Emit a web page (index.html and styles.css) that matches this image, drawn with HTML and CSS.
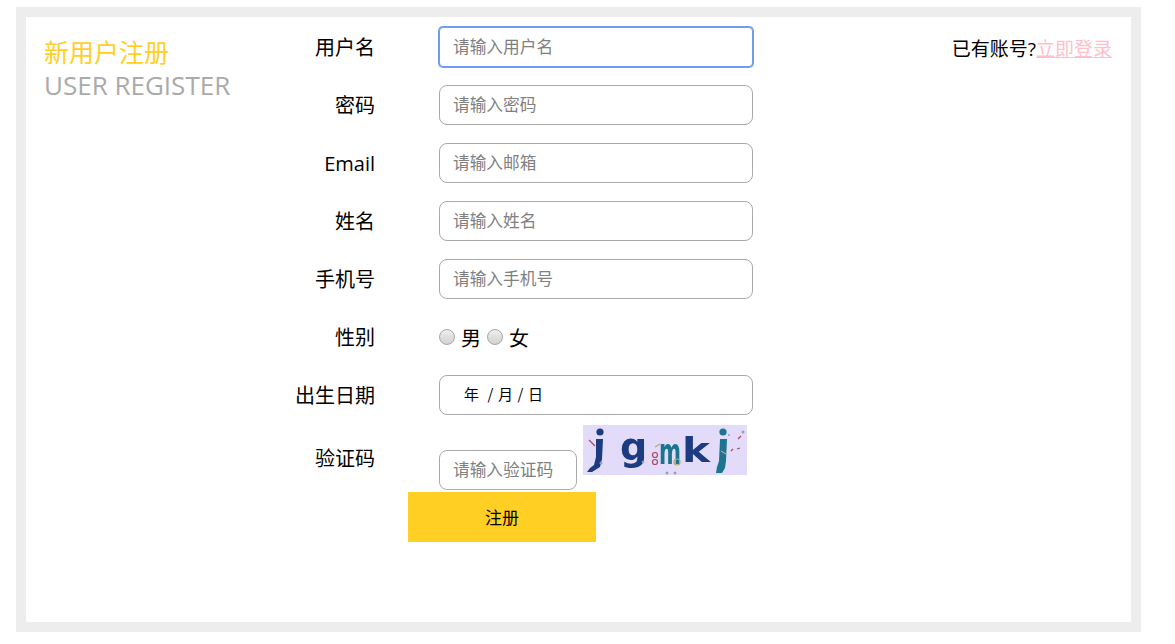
FILE: index.html
```html
<!DOCTYPE html>
<html lang="zh-CN">
<head>
<meta charset="utf-8">
<title>新用户注册</title>
<link rel="stylesheet" href="styles.css">
</head>
<body>
<main class="card">
  <header class="intro">
    <h1 class="intro-cn">新用户注册</h1>
    <p class="intro-en">USER REGISTER</p>
  </header>
  <form class="form">
    <div class="row">
      <label class="label">用户名</label>
      <input class="input input-focus" type="text" placeholder="请输入用户名">
    </div>
    <div class="row">
      <label class="label">密码</label>
      <input class="input" type="text" placeholder="请输入密码">
    </div>
    <div class="row">
      <label class="label">Email</label>
      <input class="input" type="text" placeholder="请输入邮箱">
    </div>
    <div class="row">
      <label class="label">姓名</label>
      <input class="input" type="text" placeholder="请输入姓名">
    </div>
    <div class="row">
      <label class="label">手机号</label>
      <input class="input" type="text" placeholder="请输入手机号">
    </div>
    <div class="row">
      <label class="label">性别</label>
      <div class="radios">
        <input class="radio" type="radio" name="sex"><span class="radio-text">男</span>
        <input class="radio" type="radio" name="sex"><span class="radio-text">女</span>
      </div>
    </div>
    <div class="row row-date">
      <label class="label">出生日期</label>
      <div class="input date"><span class="date-y">年</span><span class="date-sep">/</span><span>月</span><span class="date-sep">/</span><span>日</span></div>
    </div>
    <div class="row row-captcha">
      <label class="label label-captcha">验证码</label>
      <div class="captcha">
        <input class="input input-captcha" type="text" placeholder="请输入验证码">
        <svg class="captcha-img" width="164" height="50" viewBox="0 0 164 50" aria-label="验证码图片">
          <defs><filter id="soft"><feGaussianBlur stdDeviation="0.5"/></filter></defs>
          <rect width="164" height="50" fill="#e2dcfa"/>
          <g filter="url(#soft)">
            <g font-family="DejaVu Sans, sans-serif" font-weight="700" fill="#1c3a80">
              <circle cx="17" cy="7" r="3.6"/>
              <path d="M13 14h7l-1 20-2 8-8 5H4l3-4 4-3 2-8z"/>
              <text x="37" y="35" font-size="38">g</text>
              <text x="76" y="39" font-size="36" fill="#1a7590" textLength="22" lengthAdjust="spacingAndGlyphs">m</text>
              <text x="99" y="37" font-size="34" textLength="28" lengthAdjust="spacingAndGlyphs">k</text>
              <circle cx="140" cy="7" r="3.6" fill="#1a7590"/>
              <path d="M137 14h7l-1 22-1 7-3 5h-6l1-6 2-6z" fill="#1a7590"/>
            </g>
            <g fill="none" stroke="#b3425f" stroke-width="1.2">
              <circle cx="72" cy="30" r="2.5"/>
              <circle cx="72" cy="37" r="2.5"/>
              <path d="M6 15l6 6"/>
              <path d="M155 14l3-3M148 26l2-2M154 24l3-1"/>
            </g>
            <g fill="none" stroke="#b8a86a" stroke-width="1.2">
              <circle cx="94" cy="37" r="3"/>
              <path d="M72 22l5-3M138 26l5 3"/>
            </g>
            <g fill="#9aa0b5">
              <circle cx="84" cy="48" r="1.5"/>
              <circle cx="92" cy="48" r="1.5"/>
              <circle cx="146" cy="10" r="1"/>
              <circle cx="160" cy="7" r="1.5"/>
              <circle cx="18" cy="38" r="1.5"/>
              <circle cx="60" cy="37" r="1.3"/>
            </g>
          </g>
        </svg>
      </div>
    </div>
    <button class="submit" type="button">注册</button>
  </form>
  <aside class="login">已有账号?<a class="login-link" href="#">立即登录</a></aside>
</main>
</body>
</html>
```
FILE: styles.css
```css
* { box-sizing: border-box; }

html, body { margin: 0; height: 100%; background: #fff; }

body {
  padding: 7px 34px 12px 16px;
  font-family: "Open Sans", "Noto Sans CJK SC", sans-serif;
  color: #000;
}

.card {
  display: flex;
  align-items: flex-start;
  width: 1125px;
  height: 625px;
  border: 10px solid #ededed;
  background: #fff;
}

.intro {
  width: 239px;
  flex: none;
  padding: 19px 0 0 18px;
}

.intro-cn {
  margin: 0;
  height: 33px;
  font-size: 25px;
  font-weight: 400;
  line-height: 32px;
  color: #ffcf26;
}

.intro-en {
  margin: 0;
  height: 32px;
  font-size: 26px;
  line-height: 32px;
  color: #aaa;
  white-space: nowrap;
}

.form {
  width: 488px;
  flex: none;
  padding-top: 10px;
}

.row {
  display: flex;
  align-items: flex-start;
  height: 40px;
  margin-bottom: 18px;
}

.row-date { margin-bottom: 10px; }

.row-captcha {
  height: 65px;
  margin-bottom: 2px;
}

.label {
  width: 110px;
  height: 40px;
  flex: none;
  margin-right: 64px;
  padding-top: 1px;
  font-size: 20px;
  line-height: 40px;
  text-align: right;
}

.label-captcha { margin-top: 13px; }

.input {
  width: 314px;
  height: 40px;
  padding: 0 14px 2px 13px;
  border: 1px solid #aaa;
  border-radius: 8px;
  background: #fff;
  font-family: "Noto Sans CJK SC", sans-serif;
  font-size: 16.7px;
  outline: none;
}

.input::placeholder { color: #808080; opacity: 1; }

.input-focus {
  border-color: #6e9df0;
  box-shadow: 0 0 0 1px #6e9df0;
  border-radius: 4px;
}

.radios {
  display: flex;
  align-items: center;
  height: 44px;
  font-size: 20px;
}

.radio {
  appearance: none;
  width: 16px;
  height: 16px;
  margin: 0 6px 4px 0;
  border: 1px solid #a8a8a8;
  border-radius: 50%;
  background: linear-gradient(#eee, #d2d2d2);
}

.radio-text {
  margin-right: 6px;
  line-height: 40px;
}

.date {
  display: flex;
  align-items: center;
  padding-left: 24px;
  padding-bottom: 3px;
  font-size: 15px;
}

.date-y { margin-right: 4px; }

.date-sep {
  width: 15px;
  text-align: center;
}

.captcha {
  display: flex;
  align-items: flex-start;
}

.input-captcha {
  width: 138px;
  margin-top: 25px;
}

.captcha-img {
  display: block;
  flex: none;
  margin-left: 6px;
}

.submit {
  display: block;
  width: 188px;
  height: 50px;
  margin-left: 143px;
  padding-bottom: 3px;
  border: 0;
  background: #ffcf23;
  color: #000;
  font-family: "Noto Sans CJK SC", sans-serif;
  font-size: 17px;
}

.login {
  margin-left: auto;
  padding: 16px 19px 0 0;
  font-size: 19px;
  line-height: 32px;
  white-space: nowrap;
}

.login-link {
  color: #ffc0cb;
  text-decoration: underline;
  text-decoration-thickness: 1px;
}
```
